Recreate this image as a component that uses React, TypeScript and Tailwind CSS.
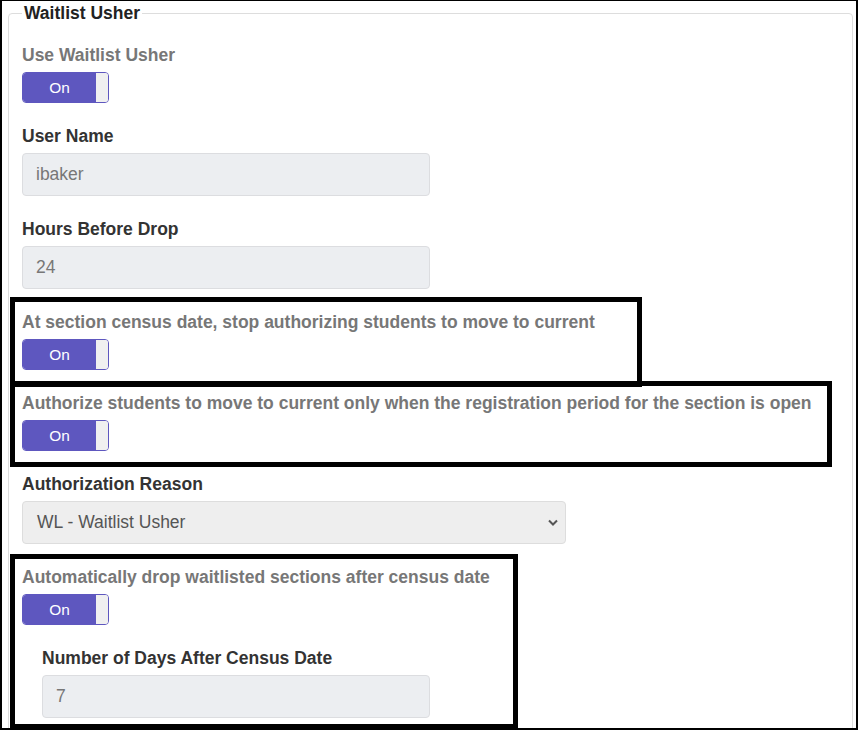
import type { ReactNode } from "react";

const font = { fontFamily: '"Liberation Sans", Arial, sans-serif' };

function Label({ children, muted = false }: { children: ReactNode; muted?: boolean }) {
	return (
		<div
			className={`h-[20px] whitespace-nowrap text-[17.5px] font-bold leading-[20px] ${muted ? "text-[#777777]" : "text-[#333333]"}`}
		>
			{children}
		</div>
	);
}

function Toggle() {
	return (
		<div className="mt-[7px] flex h-[31px] w-[87px] overflow-hidden rounded-[4px] border border-[#5e57bf]">
			<span className="flex flex-1 items-center justify-center bg-[#5e57bf] text-[15.4px] text-white">On</span>
			<span className="w-[12px] bg-[#f0f0f0]" />
		</div>
	);
}

function TextBox({ value, width }: { value: string; width: string }) {
	return (
		<input
			readOnly
			value={value}
			className={`mt-[7px] block h-[43px] ${width} rounded-[4px] border border-[#dcdde0] bg-[#eceef1] px-[13px] text-[17.5px] text-[#777777] outline-none`}
		/>
	);
}

export default function App() {
	return (
		<div
			className="relative h-[730px] w-[858px] overflow-hidden border-x-2 border-t border-b-2 border-black bg-white"
			style={font}
		>
			<fieldset className="ml-[6px] mt-[2px] w-[845px] rounded-[4px] border border-[#dddddd] pl-[13px] pt-[22px] pb-10">
				<legend className="px-[2px] text-[17.5px] font-bold leading-[20px] text-[#222222]">Waitlist Usher</legend>

				<div className="flex flex-col gap-[23px]">
					<div>
						<Label muted>Use Waitlist Usher</Label>
						<Toggle />
					</div>

					<div>
						<Label>User Name</Label>
						<TextBox value="ibaker" width="w-[408px]" />
					</div>

					<div>
						<Label>Hours Before Drop</Label>
						<TextBox value="24" width="w-[408px]" />
					</div>

					<div>
						<Label muted>At section census date, stop authorizing students to move to current</Label>
						<Toggle />
					</div>

					<div>
						<Label muted>
							Authorize students to move to current only when the registration period for the section is open
						</Label>
						<Toggle />
					</div>

					<div>
						<Label>Authorization Reason</Label>
						<div className="mt-[7px] flex h-[43px] w-[544px] items-center justify-between rounded-[4px] border border-[#dddddd] bg-[#eeeeee] pl-[14px] pr-[7px] text-[17.5px] text-[#555555]">
							<span>WL - Waitlist Usher</span>
							<svg width="10" height="7" viewBox="0 0 10 7" fill="none">
								<path d="M1 1.5 5 5.5l4-4" stroke="#555555" strokeWidth="2" />
							</svg>
						</div>
					</div>

					<div>
						<Label muted>Automatically drop waitlisted sections after census date</Label>
						<Toggle />
						<div className="ml-[20px] mt-[23px]">
							<Label>Number of Days After Census Date</Label>
							<TextBox value="7" width="w-[388px]" />
						</div>
					</div>
				</div>
			</fieldset>

			{/* annotation boxes drawn over the form */}
			<div className="pointer-events-none absolute left-[8px] top-[296px] h-[90px] w-[632px] border-[5px] border-black" />
			<div className="pointer-events-none absolute left-[8px] top-[380px] h-[86px] w-[822px] border-[5px] border-black" />
			<div className="pointer-events-none absolute left-[8px] top-[553px] h-[175px] w-[508px] border-[5px] border-black" />
		</div>
	);
}
